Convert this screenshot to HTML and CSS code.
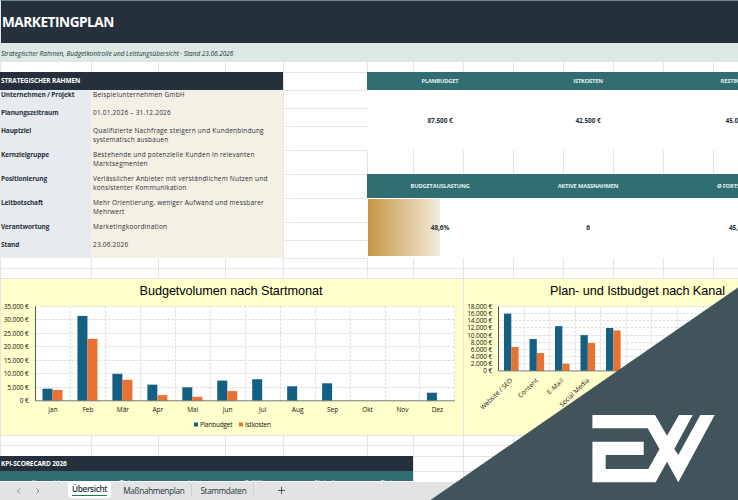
FILE: index.html
```html
<!DOCTYPE html>
<html lang="de">
<head>
  <meta charset="UTF-8" />
  <meta name="viewport" content="width=device-width, initial-scale=1.0"/>
  <title>Marketingplan</title>
  <link rel="stylesheet" href="styles.css">
</head>
<body>
  <div class="window">
  <table class="sheet">
    <colgroup>
      <col class="c91"><col class="c67"><col class="c67"><col class="c58"><col class="c84"><col class="c46">
      <col><col><col><col><col><col><col><col>
    </colgroup>
    <tr class="h43"><td colspan="14" class="title"><span>MARKETINGPLAN</span></td></tr>
    <tr class="h19"><td colspan="14" class="subtitle"><span>Strategischer Rahmen, Budgetkontrolle und Leistungsübersicht · Stand 23.06.2026</span></td></tr>
    <tr class="h10 open"><td></td><td></td><td></td><td></td><td></td><td></td><td></td><td></td><td></td><td></td><td></td><td></td><td></td><td></td></tr>
    <tr class="h18">
      <td colspan="4" class="section"><span>STRATEGISCHER RAHMEN</span></td><td></td>
      <td colspan="3" class="kpi-head"><span>PLANBUDGET</span></td>
      <td colspan="3" class="kpi-head"><span>ISTKOSTEN</span></td>
      <td colspan="3" class="kpi-head"><span>RESTBUDGET</span></td>
    </tr>
    <tr class="h18">
      <td class="label">Unternehmen / Projekt</td><td colspan="3" class="text">Beispielunternehmen GmbH</td><td></td>
      <td colspan="3" rowspan="3" class="kpi money">87.500 €</td>
      <td colspan="3" rowspan="3" class="kpi money">42.500 €</td>
      <td colspan="3" rowspan="3" class="kpi money">45.000 €</td>
    </tr>
    <tr class="h18"><td class="label">Planungszeitraum</td><td colspan="3" class="text">01.01.2026 – 31.12.2026</td><td></td></tr>
    <tr class="h24"><td class="label">Hauptziel</td><td colspan="3" class="text">Qualifizierte Nachfrage steigern und Kundenbindung<br>systematisch ausbauen</td><td></td></tr>
    <tr class="h24 open"><td class="label">Kernzielgruppe</td><td colspan="3" class="text">Bestehende und potenzielle Kunden in relevanten<br>Marktsegmenten</td><td class="lined"></td><td></td><td></td><td></td><td></td><td></td><td></td><td></td><td></td><td></td></tr>
    <tr class="h24">
      <td class="label">Positionierung</td><td colspan="3" class="text">Verlässlicher Anbieter mit verständlichem Nutzen und<br>konsistenter Kommunikation</td><td></td>
      <td colspan="3" class="kpi-head"><span>BUDGETAUSLASTUNG</span></td>
      <td colspan="3" class="kpi-head"><span>AKTIVE MASSNAHMEN</span></td>
      <td colspan="3" class="kpi-head"><span>Ø FORTSCHRITT</span></td>
    </tr>
    <tr class="h24">
      <td class="label">Leitbotschaft</td><td colspan="3" class="text">Mehr Orientierung, weniger Aufwand und messbarer<br>Mehrwert</td><td></td>
      <td colspan="3" rowspan="3" class="kpi usage">48,6%</td>
      <td colspan="3" rowspan="3" class="kpi">6</td>
      <td colspan="3" rowspan="3" class="kpi">45,0%</td>
    </tr>
    <tr class="h18"><td class="label">Verantwortung</td><td colspan="3" class="text">Marketingkoordination</td><td></td></tr>
    <tr class="h18"><td class="label">Stand</td><td colspan="3" class="text">23.06.2026</td><td></td></tr>
    <tr class="h10 open"><td></td><td></td><td></td><td></td><td class="lined"></td><td></td><td></td><td></td><td></td><td></td><td></td><td></td><td></td><td></td></tr>
    <tr class="h10"><td></td><td></td><td></td><td></td><td></td><td></td><td></td><td></td><td></td><td></td><td></td><td></td><td></td><td></td></tr>
    <tr class="h157">
      <td colspan="7" class="chart"><svg id="months" width="462" height="156"></svg></td>
      <td colspan="7" class="chart"><svg id="channels" width="349" height="156"></svg></td>
    </tr>
    <tr class="h10"><td></td><td></td><td></td><td></td><td></td><td></td><td></td><td></td><td></td><td></td><td></td><td></td><td></td><td></td></tr>
    <tr class="h11"><td></td><td></td><td></td><td></td><td></td><td></td><td></td><td></td><td></td><td></td><td></td><td></td><td></td><td></td></tr>
    <tr class="h15"><td colspan="6" class="section"><span>KPI-SCORECARD 2026</span></td><td></td><td></td><td></td><td></td><td></td><td></td><td></td><td></td></tr>
    <tr class="h10"><td colspan="6" class="score-head"><div><span>Kennzahl</span><span>Ziel</span><span>Ist</span><span>Erfüllt</span><span>Einheit</span><span>Status</span></div></td><td></td><td></td><td></td><td></td><td></td><td></td><td></td><td></td></tr>
  </table>

  <div class="tabs">
    <svg class="arrows" width="24" height="8" viewBox="0 0 24 8">
      <path d="M4 1.5L1.5 4L4 6.500M20.500 1.500L23 4L20.500 6.500"/>
    </svg>
    <div class="tab active">Übersicht</div>
    <div class="tab">Maßnahmenplan</div>
    <div class="tab">Stammdaten</div>
    <svg class="plus" width="7" height="7" viewBox="0 0 7 7"><path d="M3.5 0V7M0 3.5H7"/></svg>
  </div>

  <svg class="brand" width="308" height="213" viewBox="430 287 308 213">
    <path fill="#42545b" d="M738 287.5V500H430.5Z"/>
    <path fill="#fff" d="M592.4 415H655L667 435.7L679 415H692.7L674.3 449L678.3 455L700.3 415H714.7L678.3 482.3L667 461.7L655.6 482.3H592.4V441.7H643.7V455H605.7V469H648.3L659.5 449L647.7 428.3H592.4Z"/>
  </svg>
  </div>

  <script>
    const months = ["Jan", "Feb", "Mär", "Apr", "Mai", "Jun", "Jul", "Aug", "Sep", "Okt", "Nov", "Dez"];
    const monthPlan = [4500, 31500, 10000, 6000, 5000, 7500, 8000, 5400, 6500, 0, 0, 3000];
    const monthActual = [4000, 23000, 7800, 2100, 1500, 3600, 0, 0, 0, 0, 0, 0];
    const channels = ["Website / SEO", "Content", "E-Mail", "Social Media", "", "", "", "", ""];
    const channelWidths = [42, 25, 20, 38];
    const channelPlan = [16000, 8900, 12500, 10000, 12000, 0, 0, 0, 0];
    const channelActual = [6700, 5000, 2000, 7800, 11300, 0, 0, 0, 0];

    function euro(value) {
      return value.toLocaleString("de-DE").replace(/^(\d)(\d{3})$/, "$1.$2") + " €";
    }

    function drawChart(id, o) {
      const bottom = o.top + o.height;
      const width = o.step * o.names.length;
      let out = `<rect x="${o.left}" y="${o.top}" width="${width}" height="${o.height}" fill="#fff"/>`;
      for (let v = 0; v <= o.max; v += o.tick) {
        const y = bottom - v / o.max * o.height;
        if (v) out += `<path class="grid" d="M${o.left} ${Math.floor(y) + 0.5}h${width}"/>`;
        out += `<text class="tick" x="${o.left - o.tickGap}" y="${y + 2.4}">${euro(v)}</text>`;
      }
      o.names.forEach((name, i) => {
        const x = o.left + i * o.step;
        const h1 = o.plan[i] / o.max * o.height;
        const h2 = o.actual[i] / o.max * o.height;
        out += `<path class="grid" d="M${Math.floor(x + o.step) + 0.5} ${o.top}v${o.height}"/>`;
        out += `<rect class="plan" x="${x + o.pad}" y="${bottom - h1}" width="${o.bar}" height="${h1}"/>`;
        out += `<rect class="actual" x="${x + o.pad + o.bar}" y="${bottom - h2}" width="${o.bar}" height="${h2}"/>`;
        if (o.rotate && name) {
          out += `<text class="slant" textLength="${channelWidths[i]}" transform="translate(${x + 14.5} ${bottom + 10}) rotate(-44)">${name}</text>`;
        } else if (name) {
          out += `<text class="month" x="${x + o.step / 2}" y="${bottom + 11}">${name}</text>`;
        }
      });
      out += `<path class="axis" d="M${o.left} ${o.top}V${bottom}"/><path class="axis base" d="M${o.left} ${bottom}h${width}"/>`;
      out += `<text class="chart-title" x="${o.titleX}" y="16" textLength="${o.titleWidth}">${o.title}</text>`;
      if (!o.rotate) {
        out += `<rect class="plan" x="193" y="143.5" width="4" height="4"/><text class="legend" x="199" y="148" textLength="32.5">Planbudget</text>`;
        out += `<rect class="actual" x="238" y="143.5" width="4" height="4"/><text class="legend" x="244" y="148" textLength="26">Istkosten</text>`;
      }
      document.getElementById(id).innerHTML = out;
    }

    drawChart("months", {
      title: "Budgetvolumen nach Startmonat", titleX: 138.5, titleWidth: 183,
      names: months, plan: monthPlan, actual: monthActual,
      left: 34.5, top: 27.5, height: 94.3, step: 34.95, pad: 7, bar: 10,
      max: 35000, tick: 5000, tickGap: 7
    });
    drawChart("channels", {
      title: "Plan- und Istbudget nach Kanal", titleX: 86, titleWidth: 175,
      names: channels, plan: channelPlan, actual: channelActual,
      left: 34.5, top: 27.5, height: 64.4, step: 25.5, pad: 5.5, bar: 7.3,
      max: 18000, tick: 2000, tickGap: 6.5, rotate: true
    });
  </script>
</body>
</html>
```
FILE: styles.css
```css
body {
  margin: 0;
  font-family: "Open Sans", sans-serif;
  color: #26323a;
}
.window {
  position: relative;
  width: 738px;
  height: 500px;
  overflow: hidden;
  background: #fff;
}
.sheet {
  table-layout: fixed;
  width: 813px;
  border-collapse: separate;
  border-spacing: 0;
  font-size: 6.5px;
  line-height: 8.7px;
}
.sheet col { width: 50px; }
.sheet .c91 { width: 91px; }
.sheet .c67 { width: 67px; }
.sheet .c58 { width: 58px; }
.sheet .c84 { width: 84px; }
.sheet .c46 { width: 46px; }
td {
  box-sizing: border-box;
  padding: 0;
  border-left: 1px solid #e4e4e4;
  border-top: 1px solid #e4e4e4;
}
.h10 { height: 10px; }
.h11 { height: 11px; }
.h15 { height: 15px; }
.h18 { height: 18px; }
.h19 { height: 19px; }
.h24 { height: 24px; }
.h43 { height: 43px; }
.h157 { height: 157px; }
.open td { border-top: none; }
.open .lined { border-top: 1px solid #e4e4e4; }
.title {
  background: #25303c;
  color: #fff;
  border-top-color: #74868a;
  padding-left: 1px;
  font-size: 13.6px;
  font-weight: bold;
  line-height: 20px;
  letter-spacing: -0.45px;
}
.subtitle {
  background: #dde8e5;
  font-style: italic;
  line-height: 9px;
  letter-spacing: -0.03px;
}
.section {
  background: #25303c;
  border: none;
  color: #fff;
  padding: 1px 0 0 1px;
  font-weight: bold;
  letter-spacing: -0.12px;
}
.kpi-head {
  background: #306e71;
  border: none;
  color: #e7efef;
  text-align: center;
  font-weight: bold;
  font-size: 5.8px;
  letter-spacing: -0.2px;
}
.label, .text {
  vertical-align: top;
  border: none;
  padding: 1px 0 0 1px;
}
.label {
  background: #e7ebef;
  font-weight: bold;
  letter-spacing: -0.1px;
}
.open .label, .open .text { padding-top: 1px; }
.text {
  background: #f5f0e6;
  padding-left: 2px;
  letter-spacing: 0.22px;
}
.kpi {
  border: none;
  text-align: center;
  font-weight: bold;
  letter-spacing: -0.1px;
}
.money { padding-top: 2px; }
.usage {
  background: linear-gradient(90deg, #c69744, #f4ebdc) no-repeat 1px 1px / 72px 57px;
}
.chart {
  background: #ffffcc;
  vertical-align: top;
}
.chart svg { display: block; }
.grid {
  stroke: #d4d4d4;
  stroke-width: 0.8;
  stroke-dasharray: 2.5 1.5;
}
.plan { fill: #156082; }
.actual { fill: #e97132; }
.axis {
  stroke: #555;
  stroke-width: 1;
}
.base { stroke: #777; }
.tick, .month, .slant, .legend {
  font-size: 6.5px;
  fill: #111;
}
.tick {
  letter-spacing: -0.12px;
}
.tick, .slant { text-anchor: end; }
.month { text-anchor: middle; }
.chart-title {
  font-family: "Liberation Sans", sans-serif;
  font-size: 12.7px;
  fill: #000;
}
.score-head {
  background: #306e71;
  border: none;
  color: #fff;
  vertical-align: top;
}
.score-head div {
  display: grid;
  grid-template-columns: 91px 67px 67px 58px 84px 46px;
  height: 10px;
  padding-top: 8px;
  box-sizing: border-box;
  overflow: hidden;
  text-align: center;
}
.tabs {
  position: absolute;
  left: 0;
  right: 0;
  bottom: 0;
  height: 18.5px;
  display: flex;
  align-items: center;
  background: #e3e3e3;
  font-size: 8.2px;
  letter-spacing: -0.33px;
  line-height: 12px;
}
.arrows {
  margin: 1px 28px 0 16px;
  fill: none;
  stroke: #888;
}
.tab {
  padding: 1px 7px 0 8px;
  border-right: 1px solid #d0d0d0;
}
.tab.active {
  align-self: flex-start;
  background: #fff;
  border: none;
  border-radius: 0 0 3px 3px;
  padding: 1px 4px 2px 4px;
  margin-right: 4px;
  font-weight: 600;
}
.tab.active::after {
  content: "";
  display: block;
  height: 1px;
  background: #1d7b4c;
}
.plus {
  margin-left: 24px;
  fill: none;
  stroke: #555;
}
.brand {
  position: absolute;
  right: 0;
  bottom: 0;
}
```
